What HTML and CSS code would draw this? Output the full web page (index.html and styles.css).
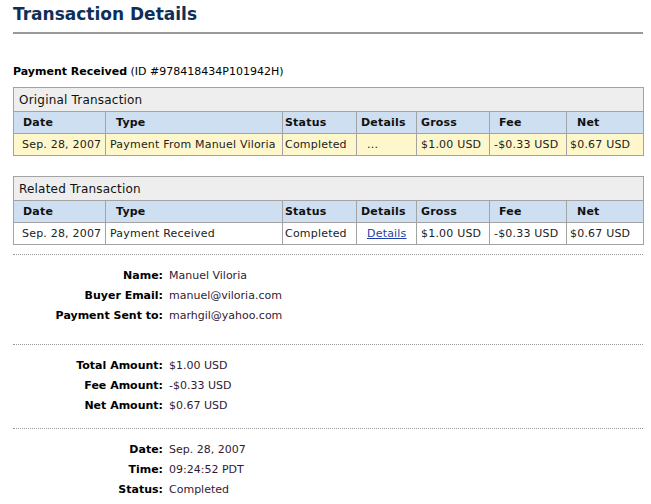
FILE: index.html
```html
<!DOCTYPE html>
<html lang="en">
<head>
    <meta charset="UTF-8">
    <title>Transaction Details</title>
    <link rel="stylesheet" href="styles.css">
</head>
<body>
    <div class="page">
        <h1 class="title">Transaction Details</h1>

        <p class="summary"><b>Payment Received</b> (ID #978418434P101942H)</p>

        <table class="txn">
            <colgroup>
                <col class="c-date"><col class="c-type"><col class="c-status"><col class="c-details">
                <col class="c-gross"><col class="c-fee"><col class="c-net">
            </colgroup>
            <tr class="cap"><td colspan="7">Original Transaction</td></tr>
            <tr class="head">
                <th>Date</th><th>Type</th><th>Status</th><th>Details</th><th>Gross</th><th>Fee</th><th>Net</th>
            </tr>
            <tr class="row hl">
                <td>Sep. 28, 2007</td><td>Payment From Manuel Viloria</td><td>Completed</td><td>...</td>
                <td>$1.00 USD</td><td>-$0.33 USD</td><td>$0.67 USD</td>
            </tr>
        </table>

        <table class="txn last">
            <colgroup>
                <col class="c-date"><col class="c-type"><col class="c-status"><col class="c-details">
                <col class="c-gross"><col class="c-fee"><col class="c-net">
            </colgroup>
            <tr class="cap"><td colspan="7">Related Transaction</td></tr>
            <tr class="head">
                <th>Date</th><th>Type</th><th>Status</th><th>Details</th><th>Gross</th><th>Fee</th><th>Net</th>
            </tr>
            <tr class="row">
                <td>Sep. 28, 2007</td><td>Payment Received</td><td>Completed</td><td><a href="#">Details</a></td>
                <td>$1.00 USD</td><td>-$0.33 USD</td><td>$0.67 USD</td>
            </tr>
        </table>

        <dl class="info first">
            <dt>Name:</dt><dd>Manuel Viloria</dd>
            <dt>Buyer Email:</dt><dd>manuel@viloria.com</dd>
            <dt>Payment Sent to:</dt><dd>marhgil@yahoo.com</dd>
        </dl>

        <dl class="info">
            <dt>Total Amount:</dt><dd>$1.00 USD</dd>
            <dt>Fee Amount:</dt><dd>-$0.33 USD</dd>
            <dt>Net Amount:</dt><dd>$0.67 USD</dd>
        </dl>

        <dl class="info">
            <dt>Date:</dt><dd>Sep. 28, 2007</dd>
            <dt>Time:</dt><dd>09:24:52 PDT</dd>
            <dt>Status:</dt><dd>Completed</dd>
        </dl>
    </div>
</body>
</html>
```

FILE: styles.css
```css
*{
    margin: 0;
    padding: 0;
    box-sizing: border-box;
}
body{
    background: #fff;
    font-family: "DejaVu Sans", Verdana, sans-serif;
    font-size: 11px;
    color: #000;
}
.page{
    width: 630px;
    margin-left: 13px;
}
.title{
    font-size: 17px;
    line-height: 24px;
    padding-top: 2px;
    padding-bottom: 6px;
    color: #0d2f5a;
    border-bottom: 2px solid #999;
}
.summary{
    margin-top: 30px;
    line-height: 16px;
    margin-bottom: 7px;
}
.txn{
    width: 630px;
    table-layout: fixed;
    border-collapse: collapse;
    margin-bottom: 20px;
    letter-spacing: 0.2px;
}
.txn.last{
    margin-bottom: 9px;
}
.c-date{ width: 92px; }
.c-type{ width: 177px; }
.c-status{ width: 74px; }
.c-details{ width: 60px; }
.c-gross{ width: 73px; }
.c-fee{ width: 77px; }
.c-net{ width: 77px; }
.txn td, .txn th{
    border: 1px solid #a3a3a3;
    height: 22px;
    text-align: left;
    white-space: nowrap;
    padding: 0 4px;
}
.txn .cap td{
    height: 24px;
    background: #eeeeee;
    font-size: 12px;
    padding-left: 5px;
    color: #111;
}
.txn .head th{
    background: #cddff0;
    font-weight: bold;
    color: #111;
}
.txn .head th:nth-child(1){ padding-left: 9px; }
.txn .head th:nth-child(2){ padding-left: 10px; }
.txn .head th:nth-child(3){ padding-left: 2px; }
.txn .head th:nth-child(6){ padding-left: 9px; }
.txn .head th:nth-child(7){ padding-left: 10px; }
.txn .row td{
    color: #222;
}
.txn .row td:nth-child(1){ padding-left: 8px; }
.txn .row td:nth-child(3){ padding-left: 2px; }
.txn .row td:nth-child(4){ padding-left: 10px; }
.txn .row td:nth-child(7){ padding-left: 3px; }
.txn .hl td{
    background: #fff7cc;
}
.txn a{
    color: #1a3fa6;
}
.info{
    display: grid;
    grid-template-columns: 150px 1fr;
    column-gap: 6px;
    border-top: 1px dotted #999;
    padding: 11px 0 12px;
    line-height: 20px;
}
.info.first{
    padding-bottom: 18px;
}
.info dt{
    font-weight: bold;
    text-align: right;
}
.info dd{
    color: #331a33;
}
```
